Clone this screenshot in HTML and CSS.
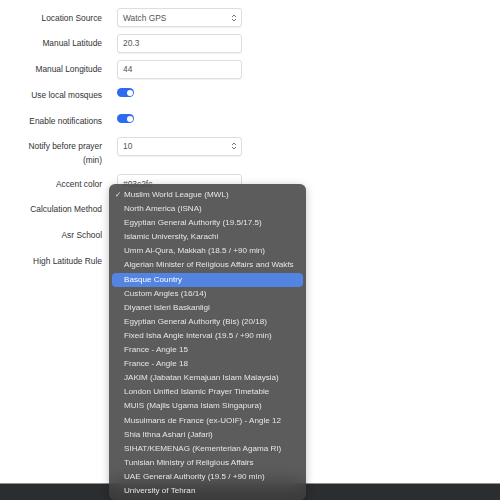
FILE: index.html
```html
<!DOCTYPE html>
<html lang="en">
<head>
    <meta charset="UTF-8">
    <meta name="viewport" content="width=device-width, initial-scale=1.0">
    <title>Settings</title>
    <link rel="stylesheet" href="styles.css">
</head>
<body>
    <div class="page">
        <form class="settings">
            <label class="field-label" for="locationSource">Location Source</label>
            <div class="select-box">
                <span class="select-value">Watch GPS</span>
                <svg class="select-arrows" width="6" height="8" viewBox="0 0 6 8"><path d="M1 3 L3 1 L5 3 M1 5 L3 7 L5 5" fill="none" stroke="#666" stroke-width="0.9"/></svg>
            </div>

            <label class="field-label" for="lat">Manual Latitude</label>
            <input class="text-input" id="lat" value="20.3">

            <label class="field-label" for="lng">Manual Longitude</label>
            <input class="text-input" id="lng" value="44">

            <label class="field-label">Use local mosques</label>
            <div class="toggle-cell"><span class="toggle on"></span></div>

            <label class="field-label">Enable notifications</label>
            <div class="toggle-cell"><span class="toggle on"></span></div>

            <label class="field-label multi">Notify before prayer (min)</label>
            <div class="select-box">
                <span class="select-value">10</span>
                <svg class="select-arrows" width="6" height="8" viewBox="0 0 6 8"><path d="M1 3 L3 1 L5 3 M1 5 L3 7 L5 5" fill="none" stroke="#666" stroke-width="0.9"/></svg>
            </div>

            <label class="field-label" for="accent">Accent color</label>
            <input class="text-input" id="accent" value="#03c2fc">

            <!-- these three selects sit under the open popup -->
            <label class="field-label">Calculation Method</label>
            <div class="select-box"></div>

            <label class="field-label">Asr School</label>
            <div class="select-box"></div>

            <label class="field-label">High Latitude Rule</label>
            <div class="select-box"></div>
        </form>

        <div class="spacer"></div>
        <div class="bottom-bar"></div>

        <!-- open popup of the Calculation Method select -->
        <ul class="popup-menu">
            <li class="checked">Muslim World League (MWL)</li>
            <li>North America (ISNA)</li>
            <li>Egyptian General Authority (19.5/17.5)</li>
            <li>Islamic University, Karachi</li>
            <li>Umm Al-Qura, Makkah (18.5 / +90 min)</li>
            <li>Algerian Minister of Religious Affairs and Wakfs</li>
            <li class="hover">Basque Country</li>
            <li>Custom Angles (16/14)</li>
            <li>Diyanet Isleri Baskanligi</li>
            <li>Egyptian General Authority (Bis) (20/18)</li>
            <li>Fixed Isha Angle Interval (19.5 / +90 min)</li>
            <li>France - Angle 15</li>
            <li>France - Angle 18</li>
            <li>JAKIM (Jabatan Kemajuan Islam Malaysia)</li>
            <li>London Unified Islamic Prayer Timetable</li>
            <li>MUIS (Majlis Ugama Islam Singapura)</li>
            <li>Musulmans de France (ex-UOIF) - Angle 12</li>
            <li>Shia Ithna Ashari (Jafari)</li>
            <li>SIHAT/KEMENAG (Kementerian Agama RI)</li>
            <li>Tunisian Ministry of Religious Affairs</li>
            <li>UAE General Authority (19.5 / +90 min)</li>
            <li>University of Tehran</li>
        </ul>
    </div>
</body>
</html>
```

FILE: styles.css
```css
body {
    margin: 0;
    font-family: "Liberation Sans", Arial, sans-serif;
    background-color: #ffffff;
}
.page {
    position: relative;
    min-height: 100vh;
    display: flex;
    flex-direction: column;
    overflow: hidden;
}
.settings {
    display: grid;
    grid-template-columns: 74px 125px;
    column-gap: 15px;
    row-gap: 6.8px;
    padding: 8px 0 0 28px;
}
.field-label {
    align-self: center;
    text-align: right;
    font-size: 8.4px;
    color: #333333;
}
.field-label.multi {
    align-self: start;
    padding-top: 3px;
    line-height: 13.7px;
}
.text-input,
.select-box {
    box-sizing: border-box;
    height: 19px;
    width: 125px;
    margin: 0;
    padding: 0 5px;
    border: 1px solid #dedede;
    border-radius: 3px;
    background-color: #ffffff;
    box-shadow: 0 1px 1px rgba(0,0,0,0.06);
    font-family: inherit;
    font-size: 8.4px;
    color: #555555;
}
.select-box {
    display: flex;
    align-items: center;
    justify-content: space-between;
}
.select-arrows {
    margin-right: -1px;
}
.toggle-cell {
    height: 19px;
    display: flex;
    align-items: center;
}
.toggle {
    position: relative;
    top: -2px;
    width: 17px;
    height: 9px;
    border-radius: 5px;
    background-color: #2d6cf0;
}
.toggle::after {
    content: "";
    position: absolute;
    top: 1.5px;
    right: 1.5px;
    width: 6px;
    height: 6px;
    border-radius: 50%;
    background-color: #ffffff;
}
.spacer {
    flex: 1;
}
.bottom-bar {
    height: 16px;
    background-color: #2b2e31;
    border-top: 1px solid #8e9092;
}
.popup-menu {
    position: absolute;
    top: 184px;
    left: 109px;
    width: 197px;
    box-sizing: border-box;
    margin: 0;
    padding: 4px 3px 2px 3px;
    list-style: none;
    background-color: rgba(61,61,61,0.84);
    backdrop-filter: blur(10px);
    border-radius: 6px;
    box-shadow: 0 2px 8px rgba(0,0,0,0.25);
}
.popup-menu li {
    height: 14.1px;
    line-height: 14.1px;
    padding-left: 12px;
    border-radius: 4px;
    font-size: 8.1px;
    color: #e6e6e6;
    white-space: nowrap;
    position: relative;
}
.popup-menu li.checked::before {
    content: "\2713";
    position: absolute;
    left: 3px;
    font-family: "DejaVu Sans", sans-serif;
    font-size: 7.5px;
}
.popup-menu li.hover {
    background-color: #5384e2;
    color: #ffffff;
}
```
